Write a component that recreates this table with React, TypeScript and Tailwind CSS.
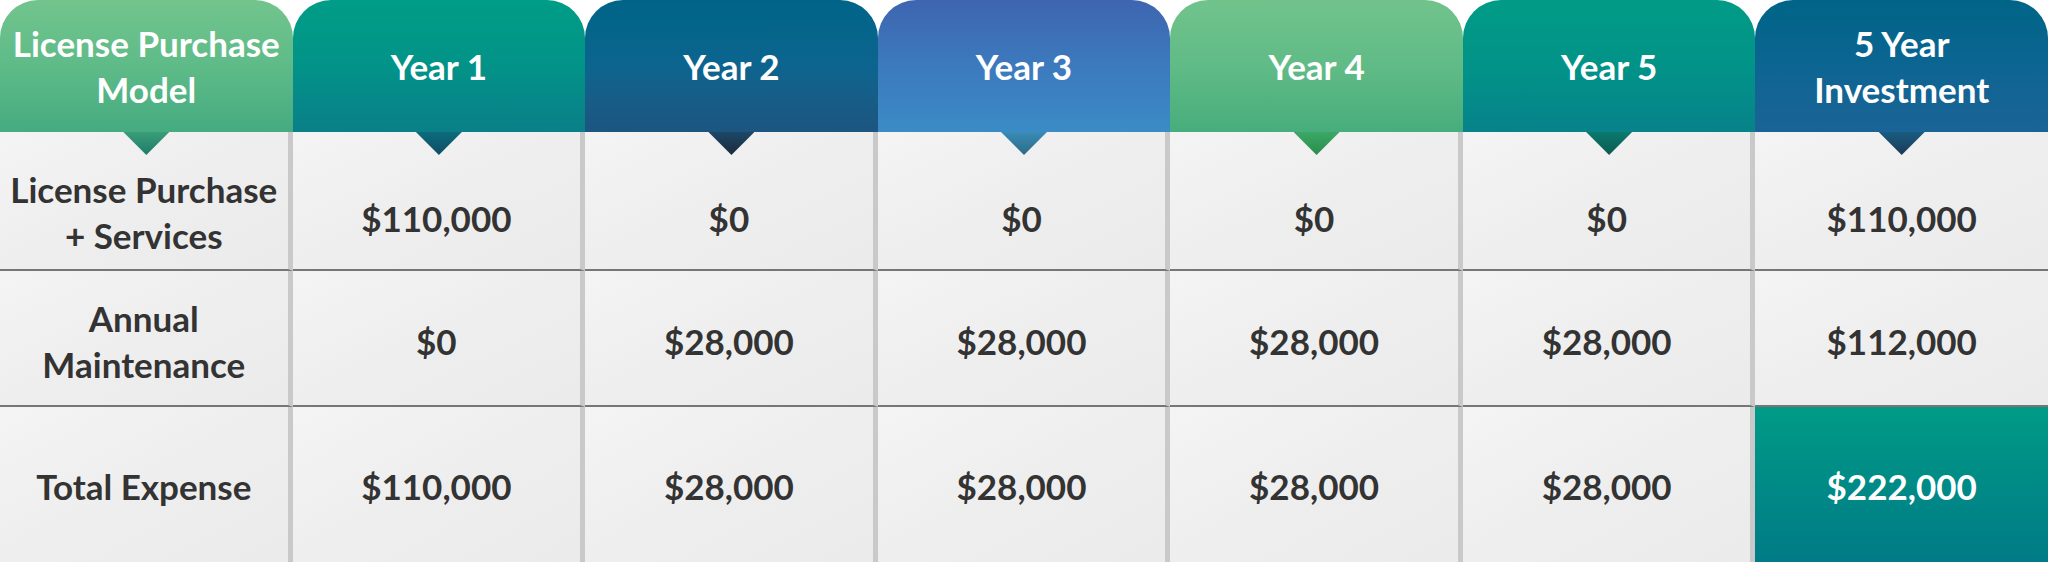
import React from "react";

type Head = { label: string[]; bg: string; tri: string };

const heads: Head[] = [
  {
    label: ["License Purchase", "Model"],
    bg: "bg-linear-to-b from-[#72c48c] via-[#5ebb88] to-[#45ab80]",
    tri: "bg-linear-to-b from-[#3a9d78] to-[#1f7c6a]",
  },
  {
    label: ["Year 1"],
    bg: "bg-linear-to-b from-[#009d87] via-[#029388] to-[#0a7f88]",
    tri: "bg-linear-to-b from-[#0b6c7c] to-[#0e4d66]",
  },
  {
    label: ["Year 2"],
    bg: "bg-linear-to-b from-[#006487] via-[#0c658f] to-[#1c5580]",
    tri: "bg-linear-to-b from-[#1b4868] to-[#1c2a3b]",
  },
  {
    label: ["Year 3"],
    bg: "bg-linear-to-b from-[#3e65b0] via-[#3c7abd] to-[#3a8bc6]",
    tri: "bg-linear-to-b from-[#3a8bb6] to-[#2a6d86]",
  },
  {
    label: ["Year 4"],
    bg: "bg-linear-to-b from-[#71c38b] via-[#60bb86] to-[#47ad7c]",
    tri: "bg-linear-to-b from-[#3ca865] to-[#2a8c4e]",
  },
  {
    label: ["Year 5"],
    bg: "bg-linear-to-b from-[#009b86] via-[#029388] to-[#07828a]",
    tri: "bg-linear-to-b from-[#0b7a6d] to-[#0a5a52]",
  },
  {
    label: ["5 Year", "Investment"],
    bg: "bg-linear-to-b from-[#006487] via-[#0c6592] to-[#1a6396]",
    tri: "bg-linear-to-b from-[#185c82] to-[#1a3a55]",
  },
];

const rows: { label: string[]; values: string[]; h: string; pad: string; labelPad: string; line: boolean }[] = [
  {
    label: ["License Purchase", "+ Services"],
    values: ["$110,000", "$0", "$0", "$0", "$0", "$110,000"],
    h: "h-[139px]",
    pad: "pt-[34px]",
    labelPad: "pt-[22px]",
    line: true,
  },
  {
    label: ["Annual", "Maintenance"],
    values: ["$0", "$28,000", "$28,000", "$28,000", "$28,000", "$112,000"],
    h: "h-[136px]",
    pad: "pt-[6px]",
    labelPad: "pt-[6px]",
    line: true,
  },
  {
    label: ["Total Expense"],
    values: ["$110,000", "$28,000", "$28,000", "$28,000", "$28,000", "$222,000"],
    h: "h-[156px]",
    pad: "pt-[2px]",
    labelPad: "pt-[2px]",
    line: false,
  },
];

export default function App() {
  return (
    <div
      className="w-[2048px] h-[562px] bg-white overflow-hidden"
      style={{ fontFamily: "Lato, 'Open Sans', sans-serif" }}
    >
      <div className="grid grid-cols-7">
        {heads.map((h, i) => (
          <div
            key={i}
            className={`relative h-[132px] rounded-t-[38px] ${h.bg} flex flex-col items-center justify-center text-white font-bold text-[35px] leading-[46px] z-10`}
          >
            {h.label.map((l, j) => (
              <div key={j} className="whitespace-nowrap">
                {l}
              </div>
            ))}
            <div
              className={`absolute top-full left-1/2 -translate-x-1/2 w-[46px] h-[23px] ${h.tri} [clip-path:polygon(0_0,100%_0,50%_100%)]`}
            />
          </div>
        ))}
      </div>
      {rows.map((r, ri) => (
        <div key={ri} className="grid grid-cols-7">
          {[r.label, ...r.values.map((v) => [v])].map((cell, ci) => {
            const isTotal = ri === 2 && ci === 6;
            const last = ci === 6;
            return (
              <div
                key={ci}
                className={`${r.h} ${ci === 0 ? r.labelPad : r.pad} flex flex-col items-center justify-center font-bold text-[35px] leading-[46px] ${
                  isTotal
                    ? "bg-linear-to-b from-[#009a86] to-[#007b86] text-white"
                    : "bg-linear-to-br from-[#f4f4f4] via-[#eeeeee] to-[#ebebeb] text-[#333333]"
                } ${last ? "" : "border-r-[5px] border-r-[#c9c9c9]"} ${
                  r.line ? "border-b-2 border-b-[#767676]" : ""
                }`}
              >
                {cell.map((l, j) => (
                  <div key={j} className="whitespace-nowrap">
                    {l}
                  </div>
                ))}
              </div>
            );
          })}
        </div>
      ))}
    </div>
  );
}
